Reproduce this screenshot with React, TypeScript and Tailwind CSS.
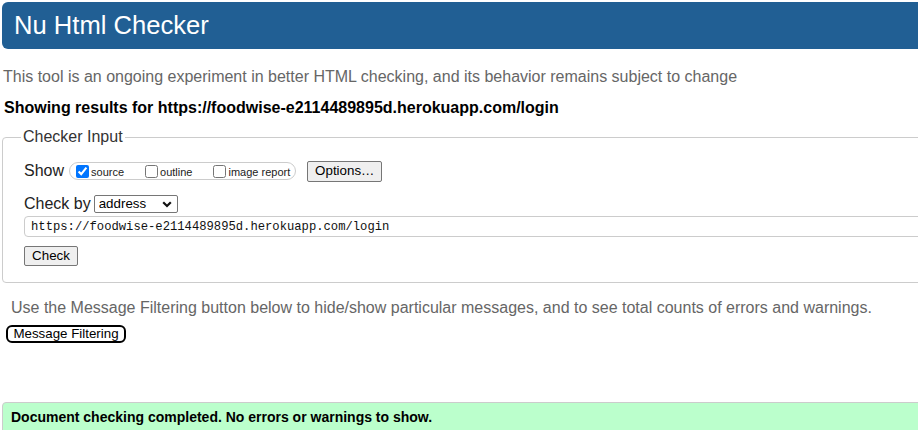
export default function App() {
  return (
    <div className="h-[430px] w-full overflow-hidden bg-white font-['Liberation_Sans',Arial,sans-serif] text-[16px] text-[#222]">
      <div className="w-[980px]">
        {/* Title bar */}
        <header className="ml-[2px] mt-[2px] flex h-[47px] items-center rounded-l-[6px] bg-[#215f94] pl-[12px] text-[25.6px] leading-none text-white">
          <h1>Nu Html Checker</h1>
        </header>

        <p className="ml-[3px] mt-[19px] leading-[18px] text-[#666]">
          This tool is an ongoing experiment in better HTML checking, and its behavior remains subject to change
        </p>
        <p className="ml-[4px] mt-[13px] font-bold leading-[18px] text-black">
          Showing results for https://foodwise-e2114489895d.herokuapp.com/login
        </p>

        {/* Checker input */}
        <fieldset className="ml-[2px] mt-[11px] rounded-[4px] border border-[#ccc] pb-[16px] pl-[21px] pr-[21px]">
          <legend className="-ml-[3px] px-[2px] leading-[18px] text-[#333]">Checker Input</legend>

          <div className="mt-[14px] flex h-[22px] items-center">
            <span className="leading-[18px]">Show</span>
            <div className="ml-[5px] flex h-[18px] items-center rounded-full border border-[#ccc] pl-[6px] pr-[5px] text-[11px]">
              <input type="checkbox" defaultChecked className="m-0 h-[13px] w-[13px]" />
              <label className="ml-[2px] mr-[21px] mt-[2px]">source</label>
              <input type="checkbox" className="m-0 h-[13px] w-[13px]" />
              <label className="ml-[2px] mr-[21px] mt-[2px]">outline</label>
              <input type="checkbox" className="m-0 h-[13px] w-[13px]" />
              <label className="ml-[2px] mt-[2px]">image report</label>
            </div>
            <button className="ml-[11px] h-[21px] w-[75px] rounded-[2px] border border-[#767676] bg-[#efefef] text-[13.33px] leading-none text-black">
              Options…
            </button>
          </div>

          <div className="mt-[13px] flex h-[18px] items-center">
            <span className="leading-[18px]">Check by</span>
            <div className="relative ml-[3px] h-[18px] w-[84px]">
              <select className="block h-full w-full appearance-none rounded-[2px] border border-[#767676] bg-white pl-[4px] text-[13.33px] leading-none text-black">
                <option>address</option>
              </select>
              <svg className="pointer-events-none absolute right-[6px] top-[6px]" width="10" height="7" viewBox="0 0 10 7">
                <path d="M1.2 1.2 5 5 8.8 1.2" fill="none" stroke="#111" strokeWidth="2.2" />
              </svg>
            </div>
          </div>

          <input
            type="text"
            readOnly
            value="https://foodwise-e2114489895d.herokuapp.com/login"
            className="mt-[3px] block h-[21px] w-full rounded-[4px] border border-[#ccc] pl-[6px] font-['Liberation_Mono',monospace] text-[12.2px] text-[#111]"
          />

          <button className="mt-[9px] block h-[20px] w-[54px] rounded-[2px] border border-[#767676] bg-[#efefef] text-[13.33px] leading-none text-black">
            Check
          </button>
        </fieldset>

        <p className="ml-[11px] mt-[16px] leading-[18px] text-[#666]">
          Use the Message Filtering button below to hide/show particular messages, and to see total counts of errors and warnings.
        </p>
        <button className="ml-[6px] mt-[8px] flex h-[18px] w-[120px] items-center justify-center rounded-[6px] border-2 border-black bg-white text-[13.33px] leading-none text-black">
          Message Filtering
        </button>

        {/* Result */}
        <div className="ml-[2px] mt-[59px] h-[60px] rounded-tl-[4px] border border-[#ccc] bg-[#bbffcc] pl-[8px] pt-[6px] text-[14px] font-bold leading-[17px] text-black">
          Document checking completed. No errors or warnings to show.
        </div>
      </div>
    </div>
  )
}
